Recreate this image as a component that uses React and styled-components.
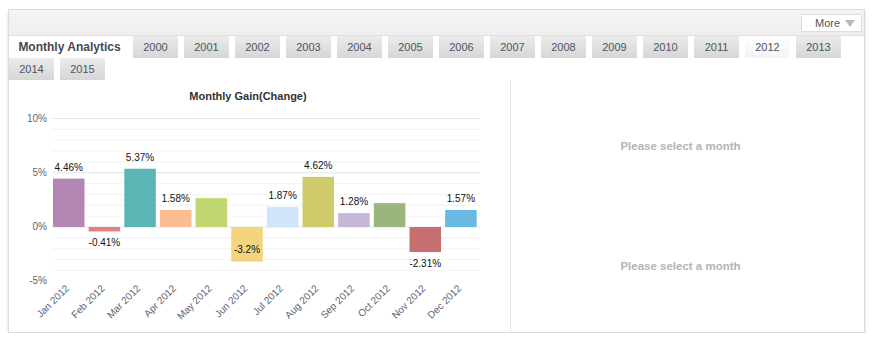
import React from 'react';
import styled, { createGlobalStyle } from 'styled-components';

const GlobalStyle = createGlobalStyle`
  html, body {
    margin: 0;
    padding: 0;
    background: #ffffff;
    font-family: "Liberation Sans", Arial, sans-serif;
  }
`;

const Page = styled.div`
  padding: 9px 0 0 8px;
`;

const Panel = styled.div`
  width: 855px;
  border: 1px solid #dcdcdc;
  background: #ffffff;
  box-shadow: 0 2px 3px rgba(0, 0, 0, 0.14);
`;

const Header = styled.div`
  height: 26px;
  background: linear-gradient(#f4f4f4, #eeeeee);
  border-bottom: 1px solid #e2e2e2;
  display: flex;
  justify-content: flex-end;
  align-items: flex-start;
  padding: 4px 2px 0 0;
  box-sizing: border-box;
`;

const MoreButton = styled.button`
  width: 61px;
  height: 18px;
  margin: 0;
  padding: 0 6px 0 13px;
  border: 1px solid #dedede;
  background: #ffffff;
  display: flex;
  align-items: center;
  justify-content: space-between;
  font-family: inherit;
  font-size: 11px;
  color: #555555;
  cursor: pointer;
`;

const Caret = styled.span`
  width: 0;
  height: 0;
  border-left: 5px solid transparent;
  border-right: 5px solid transparent;
  border-top: 7px solid #b9b9b9;
`;

const TabStrip = styled.div`
  display: flex;
  flex-wrap: wrap;
  column-gap: 6px;
  width: 840px;
`;

const Tab = styled.div`
  height: 22px;
  width: ${p => (p.wide ? '118px' : '45px')};
  box-sizing: border-box;
  display: flex;
  align-items: center;
  justify-content: center;
  padding-left: ${p => (p.wide ? '3px' : '0')};
  font-size: ${p => (p.wide ? '12px' : '11px')};
  font-weight: ${p => (p.wide ? 'bold' : 'normal')};
  color: ${p => (p.wide ? '#444a55' : '#4f5560')};
  background: ${p =>
    p.wide
      ? '#ffffff'
      : p.active
      ? 'linear-gradient(#ffffff, #f4f4f4)'
      : 'linear-gradient(#ebebeb, #d6d6d6)'};
`;

const Body = styled.div`
  display: flex;
  height: 252px;
`;

const ChartPane = styled.div`
  width: 501px;
  border-right: 1px solid #e6e6e6;
`;

const InfoPane = styled.div`
  flex: 1;
  display: flex;
  flex-direction: column;
  padding-right: 14px;
`;

const InfoCell = styled.div`
  height: 120px;
  display: flex;
  justify-content: center;
  padding-top: ${p => p.top}px;
  box-sizing: border-box;
  font-size: 11.5px;
  font-weight: bold;
  color: #b4b4b4;
`;

const years = [2000, 2001, 2002, 2003, 2004, 2005, 2006, 2007, 2008, 2009, 2010, 2011, 2012, 2013, 2014, 2015];

const months = [
  { m: 'Jan', v: 4.46, c: '#b385b3', label: '4.46%' },
  { m: 'Feb', v: -0.41, c: '#e0817f', label: '-0.41%' },
  { m: 'Mar', v: 5.37, c: '#5bb5b4', label: '5.37%' },
  { m: 'Apr', v: 1.58, c: '#fdbd91', label: '1.58%' },
  { m: 'May', v: 2.66, c: '#bfd76e', label: null },
  { m: 'Jun', v: -3.2, c: '#f5d57b', label: '-3.2%', inside: true },
  { m: 'Jul', v: 1.87, c: '#d0e5fa', label: '1.87%' },
  { m: 'Aug', v: 4.62, c: '#cfcb6b', label: '4.62%' },
  { m: 'Sep', v: 1.28, c: '#c6b6d8', label: '1.28%' },
  { m: 'Oct', v: 2.2, c: '#9bb57f', label: null },
  { m: 'Nov', v: -2.31, c: '#c66f70', label: '-2.31%' },
  { m: 'Dec', v: 1.57, c: '#69b9e2', label: '1.57%' },
];

const ZERO = 147;
const UNIT = 10.85;
const X0 = 44;
const PITCH = 35.65;
const BAR_W = 31.5;
const FONT = 'Liberation Sans, Arial, sans-serif';

function GainChart() {
  const grid = [];
  for (let p = 10; p >= -4; p--) {
    grid.push(p);
  }
  return (
    <svg width="500" height="252" viewBox="0 0 500 252" style={{ display: 'block' }}>
      <text x="239" y="20" textAnchor="middle" fontSize="11" fontWeight="bold" fill="#333" fontFamily={FONT}>
        Monthly Gain(Change)
      </text>
      {grid.map(p => (
        <line
          key={p}
          x1="43"
          x2="471"
          y1={ZERO - p * UNIT}
          y2={ZERO - p * UNIT}
          stroke={p % 5 === 0 ? '#e4e4e4' : '#f3f3f3'}
          strokeWidth="1"
        />
      ))}
      {[10, 5, 0, -5].map(p => (
        <text key={p} x="38" y={ZERO - p * UNIT + 3} textAnchor="end" fontSize="10" fill="#666" fontFamily={FONT}>
          {p}%
        </text>
      ))}
      {months.map((d, i) => {
        const x = X0 + i * PITCH;
        const h = Math.abs(d.v) * UNIT;
        const y = d.v >= 0 ? ZERO - h : ZERO;
        const cx = x + BAR_W / 2;
        let ly;
        if (d.v >= 0) ly = y - 8;
        else if (d.inside) ly = y + h - 9;
        else ly = y + h + 15;
        return (
          <g key={d.m}>
            <rect x={x} y={y} width={BAR_W} height={h} fill={d.c} />
            {d.label && (
              <text x={cx} y={ly} textAnchor="middle" fontSize="10" fill="#111" fontFamily={FONT}>
                {d.label}
              </text>
            )}
            <text
              x={cx + 1}
              y={209}
              textAnchor="end"
              fontSize="10"
              fill="#5d6474"
              fontFamily={FONT}
              transform={`rotate(-45 ${cx + 1} 209)`}
            >
              {d.m} 2012
            </text>
          </g>
        );
      })}
    </svg>
  );
}

export default function App() {
  return (
    <>
      <GlobalStyle />
      <Page>
        <Panel>
          <Header>
            <MoreButton>
              More
              <Caret />
            </MoreButton>
          </Header>
          <TabStrip>
            <Tab wide>Monthly Analytics</Tab>
            {years.map(y => (
              <Tab key={y} active={y === 2012}>
                {y}
              </Tab>
            ))}
          </TabStrip>
          <Body>
            <ChartPane>
              <GainChart />
            </ChartPane>
            <InfoPane>
              <InfoCell top={60}>Please select a month</InfoCell>
              <InfoCell top={60}>Please select a month</InfoCell>
            </InfoPane>
          </Body>
        </Panel>
      </Page>
    </>
  );
}
